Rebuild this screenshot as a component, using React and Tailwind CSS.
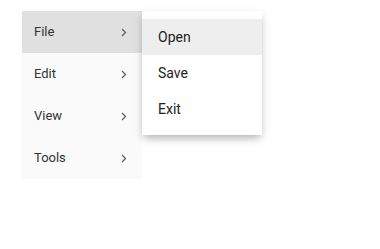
const items = ["File", "Edit", "View", "Tools"];
const sub = ["Open", "Save", "Exit"];

function Chevron() {
  return (
    <svg width="6" height="9" viewBox="0 0 6 9" fill="none" className="text-[#5f5f5f]">
      <path d="M1 1l3.5 3.5L1 8" stroke="currentColor" strokeWidth="1.3" />
    </svg>
  );
}

export default function App() {
  return (
    <div className="w-[380px] h-[249px] bg-white pt-[11px] pl-[22px] font-['Roboto',sans-serif]">
      <div className="relative w-[120px]">
        <ul className="w-[120px] bg-[#fafafa]">
          {items.map((label, i) => (
            <li
              key={label}
              className={`h-[42px] flex items-center justify-between pl-3 pr-[15px] text-[13px] text-[#333] ${
                i === 0 ? "bg-[#e0e0e0]" : ""
              }`}
            >
              <span>{label}</span>
              <Chevron />
            </li>
          ))}
        </ul>

        {/* submenu */}
        <ul className="absolute left-[120px] top-0 w-[120px] bg-white py-2 shadow-[0_5px_8px_-2px_rgba(0,0,0,0.25),0_2px_10px_0_rgba(0,0,0,0.08)]">
          {sub.map((label, i) => (
            <li
              key={label}
              className={`h-9 flex items-center px-4 text-sm text-[#212121] ${
                i === 0 ? "bg-[#eeeeee]" : ""
              }`}
            >
              {label}
            </li>
          ))}
        </ul>
      </div>
    </div>
  );
}
